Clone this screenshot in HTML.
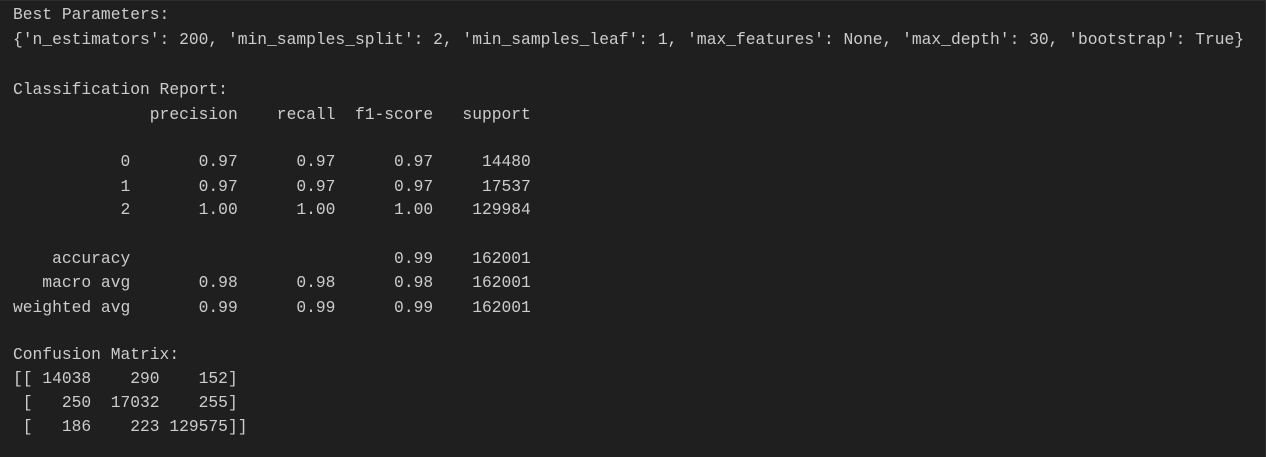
<!DOCTYPE html>
<html><head><meta charset="utf-8"><style>
html,body{margin:0;padding:0;background:#1f1f1f;}
body{width:1266px;height:457px;position:relative;overflow:hidden;}
.edge-t{position:absolute;left:0;top:0;width:1266px;height:1px;background:#2e2e2e;}
.edge-r{position:absolute;right:0;top:0;width:1px;height:457px;background:#2e2e2e;}
.l{position:absolute;left:13px;height:24px;line-height:24px;font-family:"Liberation Mono",monospace;font-size:16.3px;color:#cccccc;white-space:pre;}
</style></head><body>
<div class="edge-t"></div><div class="edge-r"></div>
<div class="l" style="top:3px">Best Parameters:</div>
<div class="l" style="top:28px">{'n_estimators': 200, 'min_samples_split': 2, 'min_samples_leaf': 1, 'max_features': None, 'max_depth': 30, 'bootstrap': True}</div>
<div class="l" style="top:78px">Classification Report:</div>
<div class="l" style="top:103px">              precision    recall  f1-score   support</div>
<div class="l" style="top:150px">           0       0.97      0.97      0.97     14480</div>
<div class="l" style="top:175px">           1       0.97      0.97      0.97     17537</div>
<div class="l" style="top:198px">           2       1.00      1.00      1.00    129984</div>
<div class="l" style="top:247px">    accuracy                           0.99    162001</div>
<div class="l" style="top:271px">   macro avg       0.98      0.98      0.98    162001</div>
<div class="l" style="top:296px">weighted avg       0.99      0.99      0.99    162001</div>
<div class="l" style="top:343px">Confusion Matrix:</div>
<div class="l" style="top:367px">[[ 14038    290    152]</div>
<div class="l" style="top:391px"> [   250  17032    255]</div>
<div class="l" style="top:415px"> [   186    223 129575]]</div>
</body></html>
